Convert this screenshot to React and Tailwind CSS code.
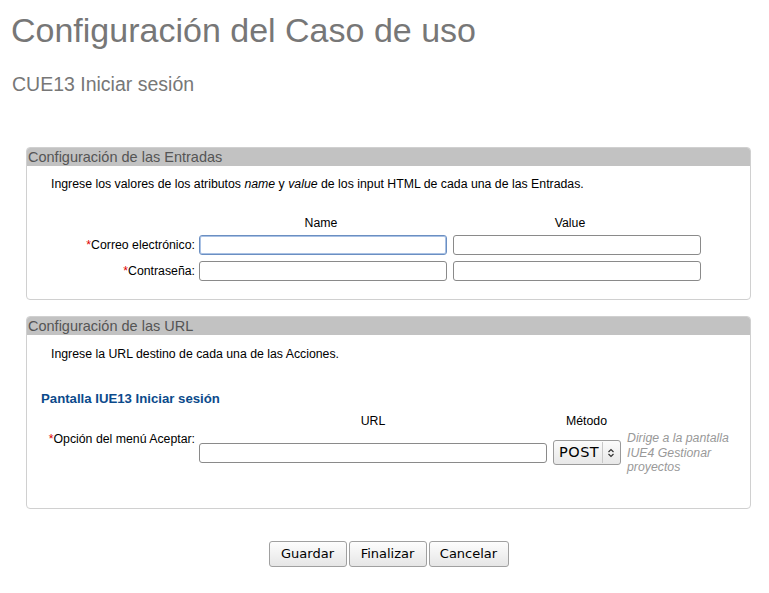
import React from 'react';

const Req = () => <span className="text-[#e00000]">*</span>;

const TextBox = ({ className = '', focused = false }) => (
  <input
    type="text"
    className={`h-[20px] rounded-[3px] border bg-white px-1 text-[12px] outline-none ${
      focused ? 'border-[#6b8fc2] shadow-[inset_0_0_0_1px_#a9c1e4]' : 'border-[#8a8a8a]'
    } ${className}`}
  />
);

const Panel = ({ title, children, className = '' }) => (
  <div className={`rounded-[4px] border border-[#d0d0d0] ${className}`}>
    <div className="h-[18px] rounded-t-[3px] bg-[#c2c2c2] pl-px text-[14.5px] leading-[18px] text-[#555]">
      {title}
    </div>
    {children}
  </div>
);

const App = () => {
  return (
    <div className="min-h-[593px] bg-white font-['Liberation_Sans',Arial,sans-serif] text-black">
      {/* Header */}
      <h1 className="pl-[11px] pt-[10px] text-[34px] leading-[40px] text-[#777]">
        Configuración del Caso de uso
      </h1>
      <h2 className="mt-[24px] pl-[12px] text-[19.5px] leading-[20px] text-[#777]">CUE13 Iniciar sesión</h2>

      {/* Entradas */}
      <Panel title="Configuración de las Entradas" className="ml-[26px] mr-[18px] mt-[53px] h-[153px]">
        <p className="pl-[24px] pt-[11px] text-[12.3px] leading-[14px]">
          Ingrese los valores de los atributos <i>name</i> y <i>value</i> de los input HTML de cada una de las Entradas.
        </p>
        <div className="mt-[25px] grid grid-cols-[168px_248px_248px] text-[12.3px]">
          <div />
          <div className="ml-[4px] text-center leading-[14px]">Name</div>
          <div className="ml-[6px] text-center leading-[14px]">Value</div>
          <div className="mt-[5px] text-right leading-[20px]"><Req />Correo electrónico:</div>
          <TextBox className="ml-[4px] mt-[5px] w-[248px]" focused />
          <TextBox className="ml-[10px] mt-[5px] w-[248px]" />
          <div className="mt-[6px] text-right leading-[20px]"><Req />Contraseña:</div>
          <TextBox className="ml-[4px] mt-[6px] w-[248px]" />
          <TextBox className="ml-[10px] mt-[6px] w-[248px]" />
        </div>
      </Panel>

      {/* URL */}
      <Panel title="Configuración de las URL" className="ml-[26px] mr-[18px] mt-[16px] h-[193px]">
        <p className="pl-[24px] pt-[12px] text-[12.3px] leading-[14px]">
          Ingrese la URL destino de cada una de las Acciones.
        </p>
        <h3 className="mt-[30px] pl-[14px] text-[13.2px] font-bold leading-[16px] text-[#0b4a8b]">
          Pantalla IUE13 Iniciar sesión
        </h3>
        <div className="mt-[7px] flex text-[12.3px]">
          <div className="w-[168px] pt-[18px] text-right leading-[14px]"><Req />Opción del menú Aceptar:</div>
          <div className="ml-[4px] flex flex-col">
            <div className="text-center leading-[14px]">URL</div>
            <TextBox className="mt-[15px] w-[348px]" />
          </div>
          <div className="ml-[6px] flex flex-col">
            <div className="pl-[13px] leading-[14px]">Método</div>
            <div className="mt-[12px] flex h-[25px] w-[68px] items-center rounded-[3px] border border-[#9a9a9a] bg-gradient-to-b from-[#fbfbfb] to-[#e8e8e8] font-['DejaVu_Sans',sans-serif] text-[14.5px]">
              <span className="pl-[5px] pr-[3px] leading-[23px] tracking-[0.5px]">POST</span>
              <span className="h-[21px] w-px bg-[#c8c8c8]" />
              <svg width="14" height="14" viewBox="0 0 14 14" className="ml-[1px]" fill="none" stroke="#333" strokeWidth="1.2">
                <path d="M4.5 6 L7 3.5 L9.5 6" />
                <path d="M4.5 8 L7 10.5 L9.5 8" />
              </svg>
            </div>
          </div>
          <div className="ml-[6px] pt-[17px] text-[12.3px] italic leading-[14.5px] text-[#999]">
            Dirige a la pantalla
            <br />
            IUE4 Gestionar
            <br />
            proyectos
          </div>
        </div>
      </Panel>

      {/* Buttons */}
      <div className="mt-[32px] flex justify-center gap-[2px] pl-[8px] font-['DejaVu_Sans',sans-serif] text-[13px]">
        {['Guardar', 'Finalizar', 'Cancelar'].map((label) => (
          <button
            key={label}
            className={`h-[26px] rounded-[3px] border border-[#a0a0a0] bg-gradient-to-b from-[#fdfdfd] to-[#e6e6e6] ${
              label === 'Cancelar' ? 'w-[80px]' : 'w-[78px]'
            }`}
          >
            {label}
          </button>
        ))}
      </div>
    </div>
  );
};

export default App;
